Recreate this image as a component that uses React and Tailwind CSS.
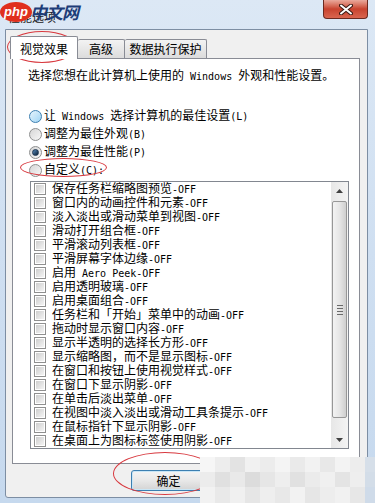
import React from 'react';

const effects = [
  '保存任务栏缩略图预览',
  '窗口内的动画控件和元素',
  '淡入淡出或滑动菜单到视图',
  '滑动打开组合框',
  '平滑滚动列表框',
  '平滑屏幕字体边缘',
  '启用 Aero Peek',
  '启用透明玻璃',
  '启用桌面组合',
  '任务栏和「开始」菜单中的动画',
  '拖动时显示窗口内容',
  '显示半透明的选择长方形',
  '显示缩略图，而不是显示图标',
  '在窗口和按钮上使用视觉样式',
  '在窗口下显示阴影',
  '在单击后淡出菜单',
  '在视图中淡入淡出或滑动工具条提示',
  '在鼠标指针下显示阴影',
  '在桌面上为图标标签使用阴影',
];

// latin runs get a half-width mono face, like SimSun
const Txt = ({ s }) =>
  s.split(/([A-Za-z\-\(\):. ]+)/).map((part, i) =>
    /^[A-Za-z\-\(\):. ]+$/.test(part) ? (
      <span key={i} className="font-['DejaVu_Sans_Mono',monospace] text-[10px]">
        {part}
      </span>
    ) : (
      <span key={i}>{part}</span>
    )
  );

const Radio = ({ kind }) => {
  if (kind === 'hover')
    return (
      <span className="w-[13px] h-[13px] rounded-full border border-[#3c7fb1] bg-gradient-to-br from-[#e6f4fc] to-[#9fd5f5] shrink-0" />
    );
  return (
    <span className="w-[13px] h-[13px] rounded-full border border-[#8e8f8f] bg-gradient-to-br from-[#d6d6d6] to-[#f7f7f7] shrink-0 flex items-center justify-center">
      {kind === 'checked' && (
        <span className="w-[7px] h-[7px] rounded-full bg-gradient-to-br from-[#5b8fc0] to-[#0d2238] border border-[#1b3450]" />
      )}
    </span>
  );
};

const Check = () => (
  <span className="w-[12px] h-[12px] border border-[#8f8f8f] bg-white p-[1px] shrink-0">
    <span className="block w-full h-full bg-gradient-to-br from-[#cfcfcf] to-[#f4f4f4]" />
  </span>
);

const mosaic = [
  ['#f6f6f6', '#ededed', '#e3e3e3', '#f1f1f1', '#ececec', '#f4f4f4', '#eaeaea', '#f2f2f2', '#e8e8e8', '#f3f3f3', '#ededed', '#d6dfe9'],
  ['#ececec', '#e0e0e0', '#e9e9e9', '#dcdcdc', '#e6e6e6', '#eeeeee', '#e1e1e1', '#ebebeb', '#f0f0f0', '#e4e4e4', '#eeeeee', '#d3dde8'],
  ['#f2f2f2', '#e9e9e9', '#f0f0f0', '#e6e6e6', '#eeeeee', '#e8e8e8', '#f2f2f2', '#e6e6e6', '#ededed', '#f1f1f1', '#e7e7e7', '#cfdbe9'],
];

export default function App() {
  return (
    <div className="relative w-[375px] h-[503px] overflow-hidden bg-gradient-to-b from-[#dce8f5] via-[#cfdff1] to-[#c6d9ee] font-['Noto_Sans_CJK_SC',sans-serif] text-[12px] text-black">
      {/* title bar */}
      <div className="h-[29px] flex items-start justify-between pl-[8px] pr-[7px]">
        <span className="mt-[9px] leading-[16px] text-[#1a1a1a]">性能选项</span>
        <div className="w-[45px] h-[19px] rounded-b-[4px] border border-t-0 border-[#6b2a20] bg-gradient-to-b from-[#e9a99c] via-[#c8432f] to-[#d9654f] flex items-center justify-center">
          <svg width="14" height="11" viewBox="0 0 14 11">
            <path d="M2 1.5 L12 9.5 M12 1.5 L2 9.5" stroke="#3b1a14" strokeWidth="4" strokeLinecap="round" />
            <path d="M2 1.5 L12 9.5 M12 1.5 L2 9.5" stroke="#ffffff" strokeWidth="2" strokeLinecap="round" />
          </svg>
        </div>
      </div>

      {/* client area */}
      <div className="ml-[5px] w-[363px] h-[469px] border border-[#7d8ea3] rounded-b-[3px] bg-[#f0f0f0] pl-[4px] pr-[7px] pt-[6px]">
        {/* tabs */}
        <div className="flex items-end h-[22px] relative z-10">
          <div className="w-[68px] h-[23px] bg-white border border-b-0 border-[#898c95] rounded-t-[2px] flex items-center justify-center pt-[1px] mb-[-1px]">
            视觉效果
          </div>
          <div className="w-[47px] h-[19px] bg-gradient-to-b from-[#f3f3f3] to-[#dcdcdc] border border-l-0 border-b-0 border-[#898c95] rounded-t-[2px] flex items-center justify-center">
            高级
          </div>
          <div className="w-[82px] h-[19px] bg-gradient-to-b from-[#f3f3f3] to-[#dcdcdc] border border-l-0 border-b-0 border-[#898c95] rounded-t-[2px] flex items-center justify-center">
            数据执行保护
          </div>
        </div>

        {/* panel */}
        <div className="ml-[2px] h-[406px] bg-white border border-[#898c95] pt-[8px] pl-[15px]">
          <div className="leading-[16px]">
            <Txt s="选择您想在此计算机上使用的 Windows 外观和性能设置。" />
          </div>
          <div className="mt-[22px] pl-[1px] flex flex-col">
            {[
              ['hover', '让 Windows 选择计算机的最佳设置(L)'],
              ['normal', '调整为最佳外观(B)'],
              ['checked', '调整为最佳性能(P)'],
              ['normal', '自定义(C):'],
            ].map(([k, t]) => (
              <div key={t} className="h-[18px] flex items-center gap-[2px]">
                <Radio kind={k} />
                <span className="leading-[16px]">
                  <Txt s={t} />
                </span>
              </div>
            ))}
          </div>

          {/* list box */}
          <div className="mt-[2px] ml-[2px] w-[319px] h-[268px] border border-[#828790] flex">
            <div className="flex-1 overflow-hidden flex flex-col pl-[3px]">
              {effects.map((e) => (
                <div key={e} className="h-[14px] flex items-center gap-[6px] whitespace-nowrap">
                  <Check />
                  <span className="leading-[14px]">
                    <Txt s={e + '-OFF'} />
                  </span>
                </div>
              ))}
            </div>
            <div className="w-[17px] bg-gradient-to-r from-[#e7e7e7] to-[#f4f4f4] flex flex-col items-center">
              <div className="h-[17px] w-full flex items-center justify-center">
                <svg width="7" height="4" viewBox="0 0 7 4">
                  <path d="M0 4 L3.5 0 L7 4 Z" fill="#404040" />
                </svg>
              </div>
              <div className="mt-[2px] w-[15px] h-[217px] rounded-[2px] border border-[#979797] bg-gradient-to-r from-[#f3f3f3] via-[#e6e6e6] to-[#cfcfcf] flex flex-col items-center justify-center gap-[2px]">
                <span className="w-[6px] h-[1px] bg-[#6a6a6a]" />
                <span className="w-[6px] h-[1px] bg-[#6a6a6a]" />
                <span className="w-[6px] h-[1px] bg-[#6a6a6a]" />
                <span className="w-[6px] h-[1px] bg-[#6a6a6a]" />
              </div>
              <div className="mt-auto h-[17px] w-full flex items-center justify-center">
                <svg width="7" height="4" viewBox="0 0 7 4">
                  <path d="M0 0 L7 0 L3.5 4 Z" fill="#404040" />
                </svg>
              </div>
            </div>
          </div>
        </div>

        {/* buttons */}
        <div className="mt-[6px] ml-[121px] w-[75px] h-[21px] rounded-[3px] border border-[#3c7fb1] bg-gradient-to-b from-[#f4f4f4] via-[#e8e8e8] to-[#d4d4d4] shadow-[inset_0_0_0_1px_#c9e6f6] flex items-center justify-center">
          确定
        </div>
      </div>

      {/* watermark logo */}
      <div className="absolute left-0 top-[2px] flex items-center">
        <span className="w-[32px] h-[20px] rounded-[50%] bg-[#e0301e] text-white italic font-bold text-[13px] leading-[20px] flex items-center justify-center font-['Liberation_Sans',sans-serif]">
          php
        </span>
        <span className="ml-[-2px] italic font-bold text-[17px] leading-[20px] text-[#1d3d78] tracking-[-1px]">
          中文网
        </span>
      </div>

      {/* annotation circles */}
      <div className="absolute left-[7px] top-[31px] w-[70px] h-[32px] rounded-[50%] border border-[#d8393f]" />
      <div className="absolute left-[20px] top-[158px] w-[87px] h-[19px] rounded-[50%] border border-[#d8393f]" />
      <div className="absolute left-[113px] top-[452px] w-[104px] h-[43px] rounded-[50%] border border-[#d8393f]" />

      {/* pixelated cover */}
      <div className="absolute left-[200px] top-[457px] grid grid-cols-[repeat(11,15px)_10px] grid-rows-[15px_15px_16px]">
        {mosaic.flat().map((c, i) => (
          <div key={i} style={{ background: c }} />
        ))}
      </div>
    </div>
  );
}
